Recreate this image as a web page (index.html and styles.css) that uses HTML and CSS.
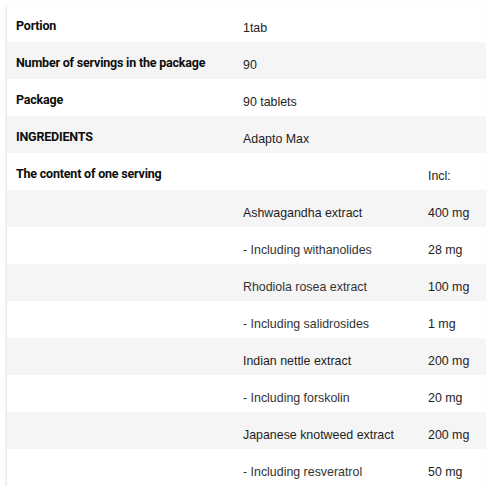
FILE: index.html
```html
<!DOCTYPE html>
<html>
<head>
<meta charset="utf-8">
<link rel="stylesheet" href="styles.css">
</head>
<body>
<div class="wrap">
<table class="specs">
  <colgroup><col class="c1"><col class="c2"><col class="c3"></colgroup>
  <tr><th>Portion</th><td colspan="2">1tab</td></tr>
  <tr class="alt"><th>Number of servings in the package</th><td colspan="2">90</td></tr>
  <tr><th>Package</th><td colspan="2">90 tablets</td></tr>
  <tr class="alt"><th>INGREDIENTS</th><td colspan="2">Adapto Max</td></tr>
  <tr><th>The content of one serving</th><td></td><td class="amt">Incl:</td></tr>
  <tr class="alt"><th></th><td>Ashwagandha extract</td><td class="amt">400 mg</td></tr>
  <tr><th></th><td class="sub">- Including withanolides</td><td class="amt">28 mg</td></tr>
  <tr class="alt"><th></th><td class="sub">Rhodiola rosea extract</td><td class="amt">100 mg</td></tr>
  <tr><th></th><td class="sub">- Including salidrosides</td><td class="amt">1 mg</td></tr>
  <tr class="alt"><th></th><td>Indian nettle extract</td><td class="amt">200 mg</td></tr>
  <tr><th></th><td class="sub">- Including forskolin</td><td class="amt">20 mg</td></tr>
  <tr class="alt"><th></th><td>Japanese knotweed extract</td><td class="amt">200 mg</td></tr>
  <tr><th></th><td class="sub">- Including resveratrol</td><td class="amt">50 mg</td></tr>
</table>
</div>
</body>
</html>
```
FILE: styles.css
```css
html, body {
  margin: 0;
  padding: 0;
  background: #ffffff;
}
body {
  font-family: "Liberation Sans", Arial, sans-serif;
  color: #1a1a1a;
}
.wrap {
  padding: 5px 0 0 7px;
}
.specs {
  width: 479px;
  border-collapse: collapse;
  table-layout: fixed;
  box-shadow: -1px 1px 2px rgba(0,0,0,0.12);
}
.c1 { width: 236px; }
.c2 { width: 185px; }
.c3 { width: 58px; }
.specs tr { height: 37px; }
.specs tr.alt { background: #f5f5f5; }
.specs th,
.specs td {
  padding: 0;
  vertical-align: middle;
  text-align: left;
  line-height: 14px;
}
.specs th {
  font-family: Roboto, "Liberation Sans", Arial, sans-serif;
  font-size: 12.5px;
  letter-spacing: -0.2px;
  padding-left: 9px;
  padding-top: 4px;
  font-weight: bold;
  color: #0d0d0d;
}
.specs td {
  font-size: 12.4px;
  font-weight: normal;
  color: #1e1e1e;
  padding-top: 8px;
}
.specs td.sub { color: #333333; }
```
